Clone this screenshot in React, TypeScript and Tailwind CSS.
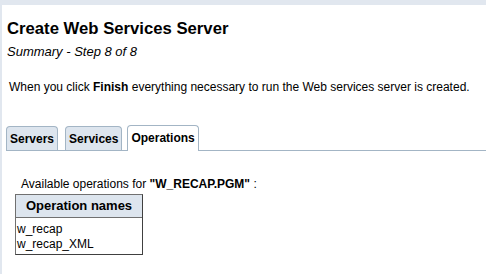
export default function App() {
  return (
    <div className="w-[486px] h-[274px] bg-[#e1e7ef] pt-[5px] pl-[2px] font-['Liberation_Sans',Arial,sans-serif] text-black overflow-hidden">
      <div className="bg-white h-full pl-[5px]">
        <h1 className="pt-[14px] text-[16.7px] font-bold leading-[20px]">Create Web Services Server</h1>
        <p className="mt-[5px] text-[13px] italic leading-[15px]">Summary - Step 8 of 8</p>
        <p className="mt-[21px] pl-[2px] text-[12px] leading-[14px]">
          When you click <b>Finish</b> everything necessary to run the Web services server is created.
        </p>

        <div className="mt-[31px] -ml-px flex items-end border-b border-[#a3b5c5] text-[12px] font-bold">
          <div className="h-[24px] px-[3px] flex items-center bg-[#dde5ee] border border-b-0 border-[#a3b5c5] rounded-t-[4px]">Servers</div>
          <div className="ml-[7px] h-[24px] px-[3px] flex items-center bg-[#dde5ee] border border-b-0 border-[#a3b5c5] rounded-t-[4px]">Services</div>
          <div className="ml-[5px] h-[26px] px-[3px] flex items-center bg-white border border-b-0 border-[#a3b5c5] rounded-t-[4px] -mb-px pb-px">Operations</div>
        </div>

        <p className="mt-[26px] pl-[14px] text-[12px] leading-[14px]">
          Available operations for <b>"W_RECAP.PGM"</b> :
        </p>
        <div className="mt-[3px] ml-[8px] w-[128px] border border-[#707070] border-r-[#404040] border-b-[#404040] text-[12px]">
          <div className="h-[23px] bg-[#dde5ee] border-b border-[#707070] flex items-center justify-center text-[13px] font-bold">Operation names</div>
          <div className="pl-[1px] pt-[4px] pb-[2px] leading-[15px]">
            <div>w_recap</div>
            <div>w_recap_XML</div>
          </div>
        </div>
      </div>
    </div>
  );
}
